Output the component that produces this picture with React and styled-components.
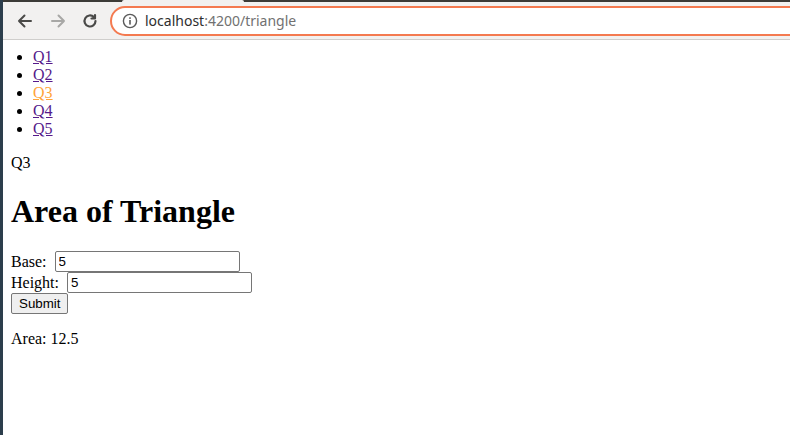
import React, { useState } from "react";
import styled, { createGlobalStyle } from "styled-components";

const GlobalStyle = createGlobalStyle`
  html, body {
    margin: 0;
    padding: 0;
    background: #2c3e4c;
  }
`;

const Window = styled.div`
  margin-left: 3px;
  height: 435px;
  background: #fff;
  display: flex;
  flex-direction: column;
  overflow: hidden;
`;

const TabStrip = styled.div`
  height: 2px;
  display: flex;
  background: #3c3b37;
  .tab {
    margin-left: 119px;
    width: 122px;
    background: #f2f1f0;
    border-radius: 2px 2px 0 0;
  }
`;

const Toolbar = styled.div`
  height: 37px;
  display: flex;
  align-items: center;
  background: #f2f1f0;
  border-bottom: 1px solid #cfcecc;
  padding-left: 6px;
`;

const NavButton = styled.button`
  width: 32px;
  height: 28px;
  border: none;
  background: transparent;
  display: flex;
  align-items: center;
  justify-content: center;
  padding: 0;
  margin-right: ${(p) => p.$gap || 0}px;
  svg {
    stroke: ${(p) => (p.$disabled ? "#a8a8a6" : "#4a4a48")};
  }
`;

const UrlBar = styled.div`
  flex: 1;
  height: 26px;
  margin-right: -30px;
  border: 2px solid #f47a50;
  border-radius: 16px;
  background: #fff;
  display: flex;
  align-items: center;
  padding-left: 10px;
  font-family: "Noto Sans", "DejaVu Sans", sans-serif;
  font-size: 14px;
  color: #2e2e2e;
  .muted {
    color: #717171;
  }
  svg {
    margin-right: 7px;
  }
`;

const Page = styled.div`
  flex: 1;
  padding: 8px;
  font-family: "Liberation Serif", "Times New Roman", serif;
  font-size: 16px;
  color: #000;
`;

const NavList = styled.ul`
  margin: 0;
  padding-left: 22px;
`;

const NavLink = styled.a`
  color: ${(p) => (p.$active ? "#ffa43a" : "#551a8b")};
  text-decoration: underline;
  cursor: pointer;
`;

const Para = styled.p`
  margin: 16px 0;
`;

const Title = styled.h1`
  font-size: 32px;
  margin: 21px 0;
  font-weight: bold;
`;

const Field = styled.input`
  width: 185px;
  height: 21px;
  box-sizing: border-box;
  border: 1px solid #767676;
  border-radius: 2px;
  padding: 1px 3px;
  font-family: "Liberation Sans", Arial, sans-serif;
  font-size: 13.33px;
  vertical-align: middle;
  margin: 0;
`;

const Row = styled.div`
  height: 21px;
  display: flex;
  align-items: center;
  gap: 8px;
`;

const SubmitButton = styled.button`
  height: 21px;
  padding: 1px 7px;
  font-family: "Liberation Sans", Arial, sans-serif;
  font-size: 13.33px;
  border: 1px solid #767676;
  border-radius: 2px;
  background: #efefef;
  color: #000;
  margin: 0;
`;

const App = () => {
  const [base, setBase] = useState("5");
  const [height, setHeight] = useState("5");
  const [area, setArea] = useState(12.5);
  const links = ["Q1", "Q2", "Q3", "Q4", "Q5"];

  return (
    <>
      <GlobalStyle />
      <Window>
        <TabStrip>
          <div className="tab" />
        </TabStrip>
        <Toolbar>
          <NavButton $gap={1}>
            <svg width="18" height="18" viewBox="0 0 18 18" fill="none" strokeWidth="2" strokeLinecap="round" strokeLinejoin="round">
              <path d="M15 9H3M8.5 3.5L3 9l5.5 5.5" />
            </svg>
          </NavButton>
          <NavButton $disabled $gap={0}>
            <svg width="18" height="18" viewBox="0 0 18 18" fill="none" strokeWidth="2" strokeLinecap="round" strokeLinejoin="round">
              <path d="M3 9h12M9.5 3.5L15 9l-5.5 5.5" />
            </svg>
          </NavButton>
          <NavButton $gap={4}>
            <svg width="18" height="18" viewBox="0 0 18 18" fill="none" strokeWidth="2.2" strokeLinecap="round">
              <path d="M14.5 9a5.5 5.5 0 1 1-1.6-3.9" />
              <path d="M14 3v3.5h-3.5" fill="#4a4a48" strokeLinejoin="round" />
            </svg>
          </NavButton>
          <UrlBar>
            <svg width="16" height="16" viewBox="0 0 16 16" fill="none">
              <circle cx="8" cy="8" r="6.6" stroke="#5a5a5a" strokeWidth="1.4" />
              <rect x="7.2" y="7" width="1.6" height="4.6" fill="#5a5a5a" />
              <rect x="7.2" y="4.3" width="1.6" height="1.6" fill="#5a5a5a" />
            </svg>
            <span>localhost</span>
            <span className="muted">:4200/triangle</span>
          </UrlBar>
        </Toolbar>
        <Page>
          <NavList>
            {links.map((q) => (
              <li key={q}>
                <NavLink $active={q === "Q3"}>{q}</NavLink>
              </li>
            ))}
          </NavList>
          <Para>Q3</Para>
          <Title>Area of Triangle</Title>
          <form
            onSubmit={(e) => {
              e.preventDefault();
              setArea((Number(base) * Number(height)) / 2);
            }}
          >
            <Row>
              <span>Base:</span>
              <Field value={base} onChange={(e) => setBase(e.target.value)} />
            </Row>
            <Row>
              <span>Height:</span>
              <Field value={height} onChange={(e) => setHeight(e.target.value)} />
            </Row>
            <SubmitButton type="submit">Submit</SubmitButton>
          </form>
          <Para>Area: {area}</Para>
        </Page>
      </Window>
    </>
  );
};

export default App;
